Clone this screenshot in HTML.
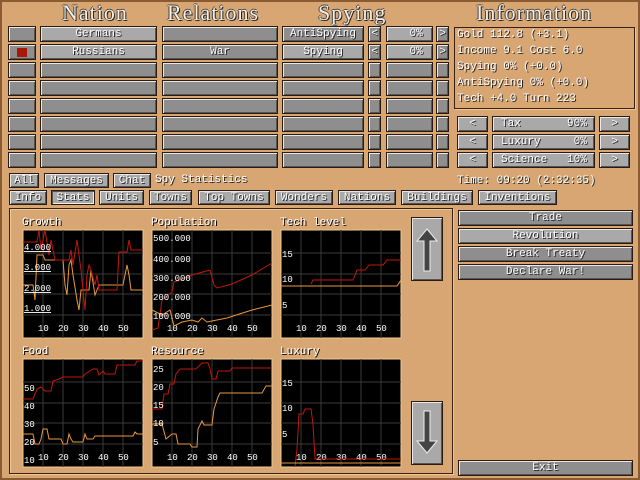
<!DOCTYPE html>
<html><head><style>
*{margin:0;padding:0;box-sizing:border-box}
body{width:640px;height:480px;overflow:hidden;background:#d8a672;font-family:"Liberation Mono",monospace;position:relative}
.a{position:absolute}
.b{position:absolute;background:#8e8e8e;border:1px solid #2a1a10;box-shadow:inset 1px 1px 0 #e8e8e8,inset -1px -1px 0 #555;color:#fff;font-size:11px;line-height:14px;text-align:center;text-shadow:1px 1px 0 #222}
.l{background:#a9a9a9}
.h{position:absolute;font-family:"Liberation Serif",serif;font-size:22px;color:#f4f0e8;text-shadow:1px 1px 0 #222,-1px 0 0 #444,0 -1px 0 #444;letter-spacing:1px;top:0}
.t{position:absolute;color:#fff;font-size:11px;text-shadow:1px 1px 0 #222;white-space:pre}
.it{position:absolute;color:#fff;font-size:11px;text-shadow:1px 1px 0 #222;white-space:pre;left:457px}
</style></head><body>
<div class="a" style="left:0;top:0;width:640px;height:480px;border:2px solid #8a5a30"></div>
<div class="h" style="left:62px">Nation</div>
<div class="h" style="left:167px">Relations</div>
<div class="h" style="left:318px">Spying</div>
<div class="h" style="left:476px">Information</div>

<div class="b" style="left:8px;top:26px;width:28px;height:16px"></div>
<div class="b l" style="left:40px;top:26px;width:117px;height:16px">Germans</div>
<div class="b" style="left:162px;top:26px;width:116px;height:16px"></div>
<div class="b" style="left:282px;top:26px;width:82px;height:16px">AntiSpying</div>
<div class="b" style="left:368px;top:26px;width:13px;height:16px">&lt;</div>
<div class="b l" style="left:386px;top:26px;width:47px;height:16px">&nbsp;&nbsp;0%</div>
<div class="b" style="left:436px;top:26px;width:13px;height:16px">&gt;</div>

<div class="b" style="left:8px;top:44px;width:28px;height:16px"><div class="a" style="left:8px;top:3px;width:10px;height:9px;background:#a81808"></div></div>
<div class="b l" style="left:40px;top:44px;width:117px;height:16px">Russians</div>
<div class="b" style="left:162px;top:44px;width:116px;height:16px">War</div>
<div class="b l" style="left:282px;top:44px;width:82px;height:16px">Spying</div>
<div class="b" style="left:368px;top:44px;width:13px;height:16px">&lt;</div>
<div class="b l" style="left:386px;top:44px;width:47px;height:16px">&nbsp;&nbsp;0%</div>
<div class="b" style="left:436px;top:44px;width:13px;height:16px">&gt;</div>

<div class="b" style="left:8px;top:62px;width:28px;height:16px"></div><div class="b" style="left:40px;top:62px;width:117px;height:16px"></div><div class="b" style="left:162px;top:62px;width:116px;height:16px"></div><div class="b" style="left:282px;top:62px;width:82px;height:16px"></div><div class="b" style="left:368px;top:62px;width:13px;height:16px"></div><div class="b" style="left:386px;top:62px;width:47px;height:16px"></div><div class="b" style="left:436px;top:62px;width:13px;height:16px"></div>
<div class="b" style="left:8px;top:80px;width:28px;height:16px"></div><div class="b" style="left:40px;top:80px;width:117px;height:16px"></div><div class="b" style="left:162px;top:80px;width:116px;height:16px"></div><div class="b" style="left:282px;top:80px;width:82px;height:16px"></div><div class="b" style="left:368px;top:80px;width:13px;height:16px"></div><div class="b" style="left:386px;top:80px;width:47px;height:16px"></div><div class="b" style="left:436px;top:80px;width:13px;height:16px"></div>
<div class="b" style="left:8px;top:98px;width:28px;height:16px"></div><div class="b" style="left:40px;top:98px;width:117px;height:16px"></div><div class="b" style="left:162px;top:98px;width:116px;height:16px"></div><div class="b" style="left:282px;top:98px;width:82px;height:16px"></div><div class="b" style="left:368px;top:98px;width:13px;height:16px"></div><div class="b" style="left:386px;top:98px;width:47px;height:16px"></div><div class="b" style="left:436px;top:98px;width:13px;height:16px"></div>
<div class="b" style="left:8px;top:116px;width:28px;height:16px"></div><div class="b" style="left:40px;top:116px;width:117px;height:16px"></div><div class="b" style="left:162px;top:116px;width:116px;height:16px"></div><div class="b" style="left:282px;top:116px;width:82px;height:16px"></div><div class="b" style="left:368px;top:116px;width:13px;height:16px"></div><div class="b" style="left:386px;top:116px;width:47px;height:16px"></div><div class="b" style="left:436px;top:116px;width:13px;height:16px"></div>
<div class="b" style="left:8px;top:134px;width:28px;height:16px"></div><div class="b" style="left:40px;top:134px;width:117px;height:16px"></div><div class="b" style="left:162px;top:134px;width:116px;height:16px"></div><div class="b" style="left:282px;top:134px;width:82px;height:16px"></div><div class="b" style="left:368px;top:134px;width:13px;height:16px"></div><div class="b" style="left:386px;top:134px;width:47px;height:16px"></div><div class="b" style="left:436px;top:134px;width:13px;height:16px"></div>
<div class="b" style="left:8px;top:152px;width:28px;height:16px"></div><div class="b" style="left:40px;top:152px;width:117px;height:16px"></div><div class="b" style="left:162px;top:152px;width:116px;height:16px"></div><div class="b" style="left:282px;top:152px;width:82px;height:16px"></div><div class="b" style="left:368px;top:152px;width:13px;height:16px"></div><div class="b" style="left:386px;top:152px;width:47px;height:16px"></div><div class="b" style="left:436px;top:152px;width:13px;height:16px"></div>

<div class="a" style="left:454px;top:27px;width:181px;height:82px;border:1px solid #3a2010;box-shadow:1px 1px 0 #f0c890"></div>
<div class="it" style="top:29px">Gold 112.8 (+3.1)</div>
<div class="it" style="top:45px">Income 9.1 Cost 6.0</div>
<div class="it" style="top:61px">Spying 0% (+0.0)</div>
<div class="it" style="top:77px">AntiSpying 0% (+0.0)</div>
<div class="it" style="top:93px">Tech +4.0 Turn 223</div>

<div class="b l" style="left:457px;top:116px;width:31px;height:16px">&lt;</div>
<div class="b l" style="left:492px;top:116px;width:103px;height:16px;text-align:left;padding-left:8px">Tax&nbsp;&nbsp;&nbsp;&nbsp;&nbsp;&nbsp;&nbsp;90%</div>
<div class="b l" style="left:599px;top:116px;width:31px;height:16px">&gt;</div>
<div class="b l" style="left:457px;top:134px;width:31px;height:16px">&lt;</div>
<div class="b l" style="left:492px;top:134px;width:103px;height:16px;text-align:left;padding-left:8px">Luxury&nbsp;&nbsp;&nbsp;&nbsp;&nbsp;0%</div>
<div class="b l" style="left:599px;top:134px;width:31px;height:16px">&gt;</div>
<div class="b l" style="left:457px;top:152px;width:31px;height:16px">&lt;</div>
<div class="b l" style="left:492px;top:152px;width:103px;height:16px;text-align:left;padding-left:8px">Science&nbsp;&nbsp;&nbsp;10%</div>
<div class="b l" style="left:599px;top:152px;width:31px;height:16px">&gt;</div>
<div class="it" style="top:175px">Time: 09:20 (2:32:35)</div>

<div class="b l" style="left:9px;top:173px;width:30px;height:15px">All</div>
<div class="b l" style="left:44px;top:173px;width:65px;height:15px">Messages</div>
<div class="b l" style="left:113px;top:173px;width:38px;height:15px">Chat</div>
<div class="t" style="left:155px;top:174px">Spy Statistics</div>
<div class="b l" style="left:9px;top:190px;width:38px;height:15px">Info</div>
<div class="b l" style="left:51px;top:190px;width:44px;height:15px;box-shadow:inset 1px 1px 0 #555,inset -1px -1px 0 #eee">Stats</div>
<div class="b l" style="left:99px;top:190px;width:45px;height:15px">Units</div>
<div class="b l" style="left:149px;top:190px;width:43px;height:15px">Towns</div>
<div class="b l" style="left:198px;top:190px;width:72px;height:15px">Top Towns</div>
<div class="b l" style="left:275px;top:190px;width:58px;height:15px">Wonders</div>
<div class="b l" style="left:338px;top:190px;width:58px;height:15px">Nations</div>
<div class="b l" style="left:401px;top:190px;width:72px;height:15px">Buildings</div>
<div class="b l" style="left:478px;top:190px;width:79px;height:15px">Inventions</div>

<div class="a" style="left:9px;top:208px;width:444px;height:266px;border:1px solid #3a2010;box-shadow:inset 1px 1px 0 #f0c890,1px 1px 0 #f0c890"></div>

<svg class="a" style="left:0;top:0" width="640" height="480" font-family="Liberation Mono,monospace" font-size="9">
<defs>
<clipPath id="c"><rect x="0" y="0" width="120" height="108"/></clipPath>
<g id="grid">
<rect x="0" y="0" width="120" height="108" fill="#000" stroke="#f0c890"/>
<g stroke="#3a3a3a"><line x1="20" y1="0" x2="20" y2="108"/><line x1="40" y1="0" x2="40" y2="108"/><line x1="60" y1="0" x2="60" y2="108"/><line x1="80" y1="0" x2="80" y2="108"/><line x1="100" y1="0" x2="100" y2="108"/>
<line x1="0" y1="23" x2="120" y2="23"/><line x1="0" y1="44" x2="120" y2="44"/><line x1="0" y1="64" x2="120" y2="64"/><line x1="0" y1="85" x2="120" y2="85"/></g>
<g fill="#fff"><text x="15" y="101">10</text><text x="35" y="101">20</text><text x="55" y="101">30</text><text x="75" y="101">40</text><text x="95" y="101">50</text></g>
</g>
</defs>
<g fill="#fff" font-size="11" style="text-shadow:1px 1px 0 #000"><text x="22" y="225">Growth</text><text x="151" y="225">Population</text><text x="280" y="225">Tech level</text>
<text x="22" y="354">Food</text><text x="151" y="354">Resource</text><text x="280" y="354">Luxury</text></g>
<g transform="translate(23,230)"><use href="#grid"/>
<g clip-path="url(#c)">
<polyline fill="none" stroke="#e89840" points="0,55 10,55 12,70 14,25 20,25 22,30 40,30 42,55 44,65 46,35 48,30 50,45 54,70 56,80 58,60 66,60 68,40 72,65 76,55 100,55 104,35 106,45 108,60 120,60"/>
<polyline fill="none" stroke="#c01808" points="0,12 14,12 16,0 18,20 22,0 26,25 28,10 32,30 46,30 48,20 50,35 54,10 58,40 60,60 62,80 64,45 66,35 68,40 72,55 74,45 76,60 94,60 96,22 104,22 106,10 108,20 120,20"/>
</g>
<g fill="#fff" text-decoration="underline"><text x="1" y="20">4.000</text><text x="1" y="40">3.000</text><text x="1" y="61">2.000</text><text x="1" y="81">1.000</text></g></g>
<g transform="translate(152,230)"><use href="#grid"/>
<polyline fill="none" stroke="#c01808" points="0,100 6,98 10,70 20,62 22,52 28,50 40,45 58,40 62,55 65,58 80,54 100,45 120,33"/>
<polyline fill="none" stroke="#e89840" points="0,80 10,85 18,80 22,96 30,92 40,90 46,92 50,88 55,92 75,88 100,80 120,75"/>
<g fill="#fff"><text x="1" y="11">500.000</text><text x="1" y="32">400.000</text><text x="1" y="51">300.000</text><text x="1" y="70">200.000</text><text x="1" y="89">100.000</text></g></g>
<g transform="translate(281,230)"><use href="#grid"/>
<polyline fill="none" stroke="#c01808" points="30,54 32,50 72,50 76,40 84,40 88,35 102,35 106,30 120,30"/>
<polyline fill="none" stroke="#e89840" points="0,56 116,56 120,50"/>
<g fill="#fff"><text x="1" y="27">15</text><text x="1" y="52">10</text><text x="1" y="78">5</text></g></g>
<g transform="translate(23,359)"><use href="#grid"/>
<polyline fill="none" stroke="#c01808" points="0,40 10,40 14,30 18,28 22,32 28,32 30,22 36,20 40,18 60,18 62,15 70,10 74,10 76,16 80,12 82,15 92,15 94,6 112,6 114,2 120,2"/>
<polyline fill="none" stroke="#e89840" points="0,75 10,75 12,85 16,85 18,80 20,70 24,70 26,80 38,80 40,85 44,85 46,75 48,80 50,83 60,83 62,75 64,80 70,80 72,77 110,77 112,73 114,75 120,75"/>
<g fill="#fff"><text x="1" y="32">50</text><text x="1" y="50">40</text><text x="1" y="68">30</text><text x="1" y="86">20</text><text x="1" y="104">10</text></g></g>
<g transform="translate(152,359)"><use href="#grid"/>
<polyline fill="none" stroke="#c01808" points="0,50 10,50 12,35 16,35 18,25 22,25 24,15 28,10 44,10 48,6 50,4 56,4 58,10 60,20 64,20 66,12 78,12 80,9 120,9"/>
<polyline fill="none" stroke="#e89840" points="0,65 10,65 14,80 20,75 24,75 26,85 38,85 40,88 45,88 46,70 50,62 52,66 60,66 62,50 64,44 66,38 68,34 110,34 114,27 120,27"/>
<g fill="#fff"><text x="1" y="13">25</text><text x="1" y="31">20</text><text x="1" y="49">15</text><text x="1" y="67">10</text><text x="1" y="86">5</text></g></g>
<g transform="translate(281,359)"><use href="#grid"/>
<polyline fill="none" stroke="#c01808" points="14,108 16,90 18,55 22,55 24,50 30,50 32,65 34,100 120,100"/>
<polyline fill="none" stroke="#e89840" points="0,104 120,104"/>
<g fill="#fff"><text x="1" y="27">15</text><text x="1" y="52">10</text><text x="1" y="78">5</text></g></g>
</svg>

<div class="b l" style="left:411px;top:217px;width:32px;height:64px"></div>
<svg class="a" style="left:411px;top:217px" width="32" height="64"><path d="M16 12 L26 24 L19 24 L19 54 L13 54 L13 24 L6 24 Z" fill="#444" stroke="#eee" stroke-width="1"/></svg>
<div class="b l" style="left:411px;top:401px;width:32px;height:64px"></div>
<svg class="a" style="left:411px;top:401px" width="32" height="64"><path d="M16 52 L26 40 L19 40 L19 10 L13 10 L13 40 L6 40 Z" fill="#444" stroke="#eee" stroke-width="1"/></svg>

<div class="b" style="left:458px;top:210px;width:175px;height:16px">Trade</div>
<div class="b l" style="left:458px;top:228px;width:175px;height:16px">Revolution</div>
<div class="b" style="left:458px;top:246px;width:175px;height:16px">Break Treaty</div>
<div class="b" style="left:458px;top:264px;width:175px;height:16px">Declare War!</div>
<div class="b" style="left:458px;top:460px;width:175px;height:16px">Exit</div>
</body></html>
